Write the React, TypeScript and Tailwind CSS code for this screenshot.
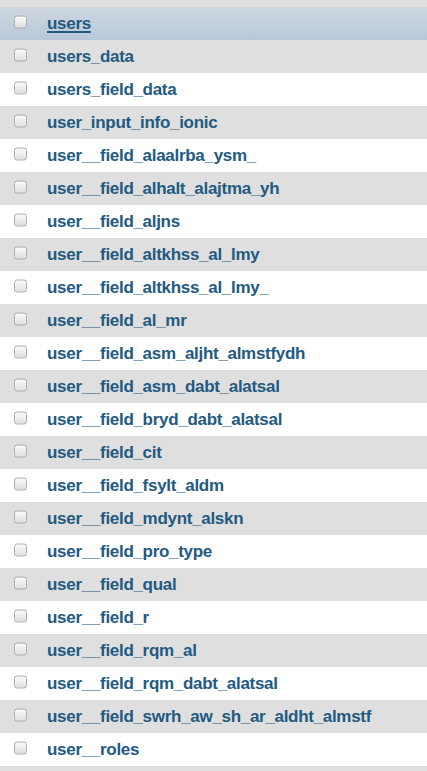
import React from "react";

const rows = [
  "users",
  "users_data",
  "users_field_data",
  "user_input_info_ionic",
  "user__field_alaalrba_ysm_",
  "user__field_alhalt_alajtma_yh",
  "user__field_aljns",
  "user__field_altkhss_al_lmy",
  "user__field_altkhss_al_lmy_",
  "user__field_al_mr",
  "user__field_asm_aljht_almstfydh",
  "user__field_asm_dabt_alatsal",
  "user__field_bryd_dabt_alatsal",
  "user__field_cit",
  "user__field_fsylt_aldm",
  "user__field_mdynt_alskn",
  "user__field_pro_type",
  "user__field_qual",
  "user__field_r",
  "user__field_rqm_al",
  "user__field_rqm_dabt_alatsal",
  "user__field_swrh_aw_sh_ar_aldht_almstf",
  "user__roles",
];

function Checkbox() {
  return (
    <div className="w-[13px] h-[13px] shrink-0 rounded-[3px] border border-[#acacac] bg-gradient-to-b from-[#fbfbfb] to-[#dedede] shadow-[inset_0_0_1px_rgba(255,255,255,0.9)] -translate-y-[1.5px]" />
  );
}

export default function App() {
  return (
    <div className="w-[427px] h-[771px] overflow-hidden bg-[#dfdfdf] pt-[7px]" style={{ fontFamily: '"Liberation Sans", Arial, sans-serif' }}>
      {rows.map((name, i) => {
        const hl = i === 0;
        const bg = hl
          ? "bg-gradient-to-b from-[#cfd7e0] to-[#b8c8d9]"
          : i % 2 === 1
          ? "bg-[#dfdfdf]"
          : "bg-white";
        return (
          <div key={name} className={`h-[33px] flex items-center pl-[14px] ${bg}`}>
            <Checkbox />
            <span
              className={`ml-[20px] text-[17px] tracking-[-0.3px] font-bold text-[#235a81] whitespace-nowrap ${hl ? "underline decoration-[1.5px] underline-offset-[2px]" : ""}`}
            >
              {name}
            </span>
          </div>
        );
      })}
    </div>
  );
}
